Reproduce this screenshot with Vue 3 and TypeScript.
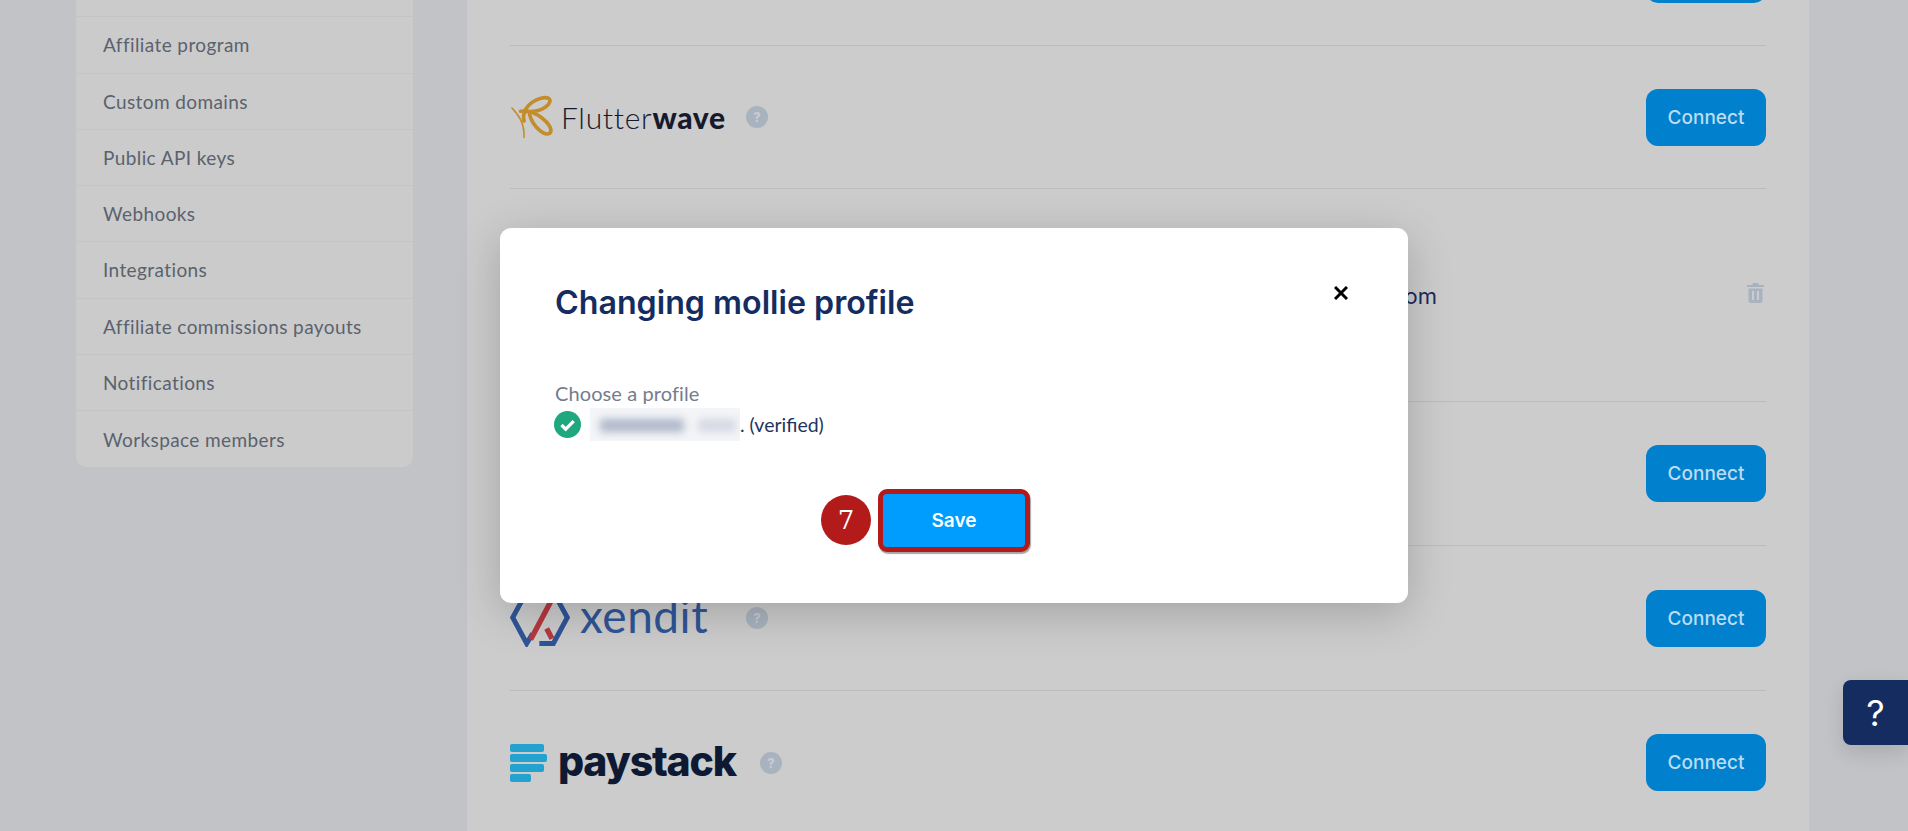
<template>
  <div class="page">
    <!-- sidebar -->
    <nav class="sidebar">
      <div class="side-item"></div>
      <a v-for="item in menu" :key="item" class="side-item">{{ item }}</a>
    </nav>

    <!-- payment providers -->
    <main class="panel">
      <div class="row">
        <button class="connect" aria-label="Connect"></button>
      </div>

      <div class="row">
        <div class="brand">
          <svg class="fw-logo" viewBox="60 105 135 135" fill="none" stroke="#c48d2b" stroke-linecap="round">
            <path d="M66 145C85 165 105 190 103 235" stroke-width="5" />
            <path d="M103 185C92 135 155 105 178 115C196 126 160 162 105 155" stroke-width="11" />
            <path d="M92 155C140 148 192 198 185 218C175 240 130 205 120 165" stroke-width="11" />
          </svg>
          <span class="fw-text">Flutter<b>wave</b></span>
          <span class="hint hint--fw">?</span>
        </div>
        <button class="connect">Connect</button>
      </div>

      <div class="row row--connected">
        <span class="account">payments@company.com</span>
        <svg class="trash" viewBox="0 0 17 20" fill="#a9b3bf">
          <path d="M6 0h5l1 2h5v2H0V2h5z" />
          <path fill-rule="evenodd" d="M1.5 5.5h14V18a2 2 0 0 1-2 2h-10a2 2 0 0 1-2-2zM5 8v9h2V8zm5 0v9h2V8z" />
        </svg>
      </div>

      <div class="row row--mid">
        <button class="connect">Connect</button>
      </div>

      <div class="row row--tall">
        <div class="brand">
          <svg class="xd-logo" viewBox="60 30 180 170" fill="none">
            <path d="M110 35L68 112L110 190L128 160M190 35L232 112L190 190H148" stroke="#2f5597" stroke-width="15" />
            <path d="M122 178L182 65M170 145L186 176" stroke="#b5393f" stroke-width="16" />
          </svg>
          <span class="xd-text">xendit</span>
          <span class="hint hint--xd">?</span>
        </div>
        <button class="connect">Connect</button>
      </div>

      <div class="row row--last">
        <div class="brand">
          <div class="ps-logo">
            <i class="b1"></i><i class="b2"></i><i class="b1"></i><i class="b3"></i>
          </div>
          <span class="ps-text">paystack</span>
          <span class="hint hint--ps">?</span>
        </div>
        <button class="connect">Connect</button>
      </div>
    </main>

    <button class="help">?</button>

    <!-- modal -->
    <div class="overlay">
      <section class="modal">
        <svg class="close" viewBox="0 0 14 14" fill="none" stroke="#000" stroke-width="3">
          <path d="M1 1l12 12M13 1L1 13" />
        </svg>
        <h2 class="title">Changing mollie profile</h2>
        <div class="label">Choose a profile</div>
        <div class="profile">
          <svg class="check" viewBox="0 0 27 27">
            <circle cx="13.5" cy="13.5" r="13.5" fill="#1fa77e" />
            <path d="M7.5 14l4.2 4.2 8-8" fill="none" stroke="#fff" stroke-width="3.2" />
          </svg>
          <span class="blurred"><i class="smear smear--a"></i><i class="smear smear--b"></i></span>
          <span class="verified">. (verified)</span>
        </div>
        <div class="actions">
          <div class="save-wrap">
            <span class="step">7</span>
            <button class="save">Save</button>
          </div>
        </div>
      </section>
    </div>
  </div>
</template>

<script setup lang="ts">
const menu: string[] = [
  'Affiliate program',
  'Custom domains',
  'Public API keys',
  'Webhooks',
  'Integrations',
  'Affiliate commissions payouts',
  'Notifications',
  'Workspace members',
]
</script>

<style>
html,
body {
  margin: 0;
  background: #c1c3c7;
}
</style>

<style scoped>
.page {
  position: relative;
  display: flex;
  align-items: flex-start;
  width: 1908px;
  height: 831px;
  overflow: hidden;
  background: #c1c3c7;
  font-family: Lato, 'Noto Sans', sans-serif;
}

/* sidebar */
.sidebar {
  flex-shrink: 0;
  width: 337px;
  margin: -39px 0 0 76px;
  background: #cbcbcb;
  border-radius: 0 0 10px 10px;
}

.side-item {
  display: flex;
  align-items: center;
  box-sizing: border-box;
  height: 56.25px;
  padding-left: 27px;
  border-bottom: 1px solid #c4c4c4;
  font-size: 19px;
  letter-spacing: 0.4px;
  color: #5a626e;
}

.side-item:last-child {
  border-bottom: 0;
}

/* main panel */
.panel {
  flex-shrink: 0;
  box-sizing: border-box;
  width: 1342px;
  margin: -97px 0 0 54px;
  padding: 0 43px;
  background: #cccccc;
}

.row {
  display: flex;
  align-items: center;
  justify-content: space-between;
  box-sizing: border-box;
  height: 143px;
  border-bottom: 1px solid #bcbcbc;
}

.row--connected {
  align-items: flex-start;
  height: 213px;
}

.row--mid {
  height: 144px;
}

.row--tall {
  height: 145px;
}

.row--last {
  border-bottom: 0;
}

.connect {
  width: 120px;
  height: 57px;
  margin-left: auto;
  border: 0;
  border-radius: 12px;
  background: #0080cd;
  color: #bcdcf2;
  font-family: Inter, sans-serif;
  font-size: 19px;
  font-weight: 500;
}

.brand {
  position: relative;
  display: flex;
  align-items: center;
  height: 60px;
}

.hint {
  position: absolute;
  top: 50%;
  width: 22px;
  height: 22px;
  margin-top: -11px;
  border-radius: 50%;
  background: #a9b3bf;
  color: #c6ccd4;
  font-family: Inter, sans-serif;
  font-size: 13px;
  font-weight: 800;
  line-height: 22px;
  text-align: center;
}

.hint--fw { left: 236px; }
.hint--xd { left: 236px; }
.hint--ps { left: 250px; }

/* flutterwave */
.fw-logo {
  width: 44px;
  height: 44px;
}

.fw-text {
  margin-left: 7px;
  font-size: 30px;
  font-weight: 300;
  letter-spacing: 0.7px;
  color: #171a2e;
}

.fw-text b {
  font-weight: 900;
}

/* mollie row */
.account {
  margin: 92px 310px 0 auto;
  font-family: Inter, sans-serif;
  font-size: 22px;
  line-height: 30px;
  color: #1c2a55;
}

.trash {
  width: 17px;
  height: 20px;
  margin: 94px 2px 0 0;
}

/* xendit */
.xd-logo {
  width: 60px;
  height: 57px;
}

.xd-text {
  margin-left: 10px;
  font-size: 46px;
  line-height: 50px;
  letter-spacing: 0.5px;
  color: #2f5597;
  transform: translateY(-2px);
}

/* paystack */
.ps-logo {
  display: flex;
  flex-direction: column;
  gap: 2px;
  width: 37px;
}

.ps-logo i {
  display: block;
  height: 8px;
  border-radius: 2px;
  background: #23a1cf;
}

.ps-logo .b1 { width: 34px; }
.ps-logo .b2 { width: 37px; }
.ps-logo .b3 { width: 21px; }

.ps-text {
  margin-left: 11px;
  font-family: Inter, sans-serif;
  font-size: 41px;
  line-height: 50px;
  font-weight: 800;
  letter-spacing: -1.2px;
  color: #0e1a33;
  transform: translateY(-2px);
}

/* help widget */
.help {
  position: absolute;
  top: 680px;
  right: 0;
  width: 65px;
  height: 65px;
  border: 0;
  border-radius: 8px 0 0 8px;
  background: #142c5f;
  box-shadow: 0 8px 20px rgba(0, 0, 0, 0.12);
  color: #fff;
  font-family: Inter, sans-serif;
  font-size: 36px;
  font-weight: 400;
}

/* modal */
.overlay {
  position: absolute;
  inset: 0;
  display: flex;
  align-items: center;
  justify-content: center;
}

.modal {
  position: relative;
  box-sizing: border-box;
  width: 908px;
  height: 375px;
  padding: 56px 55px 0;
  border-radius: 11px;
  background: #fff;
  box-shadow: 0 10px 45px rgba(0, 0, 0, 0.2);
}

.close {
  position: absolute;
  top: 58px;
  right: 60px;
  width: 14px;
  height: 14px;
}

.title {
  margin: 0;
  font-family: Inter, sans-serif;
  font-size: 32.2px;
  font-weight: 600;
  line-height: 38px;
  color: #142c5f;
}

.label {
  margin-top: 59px;
  font-size: 20px;
  line-height: 24px;
  letter-spacing: 0.1px;
  color: #747c8e;
}

.profile {
  display: flex;
  align-items: center;
  margin-top: 2px;
  height: 34px;
  font-size: 19.5px;
  color: #1f3460;
}

.check {
  flex-shrink: 0;
  width: 27px;
  height: 27px;
  margin-left: -1px;
}

.blurred {
  position: relative;
  flex-shrink: 0;
  width: 150px;
  height: 33px;
  margin-left: 9px;
  overflow: hidden;
  background: #f4f5f8;
}

.smear {
  position: absolute;
  top: 11px;
  height: 13px;
  background: #aeb6c9;
  filter: blur(4px);
}

.smear--a { left: 10px; width: 84px; }
.smear--b { left: 108px; width: 38px; opacity: 0.45; }

.actions {
  display: flex;
  justify-content: center;
  margin-top: 48px;
}

.save-wrap {
  position: relative;
}

.step {
  position: absolute;
  top: 6px;
  left: -57px;
  width: 50px;
  height: 50px;
  border-radius: 50%;
  background: #b31b1b;
  color: #fff;
  font-family: 'DejaVu Serif', serif;
  font-size: 26px;
  line-height: 50px;
  text-align: center;
}

.save {
  display: block;
  width: 152px;
  height: 63px;
  border: 5px solid #b31b1b;
  border-radius: 9px;
  background: #009dff;
  box-shadow: 1px 2px 1px rgba(0, 0, 0, 0.35);
  color: #fff;
  font-family: Inter, sans-serif;
  font-size: 19px;
  font-weight: 600;
}
</style>
